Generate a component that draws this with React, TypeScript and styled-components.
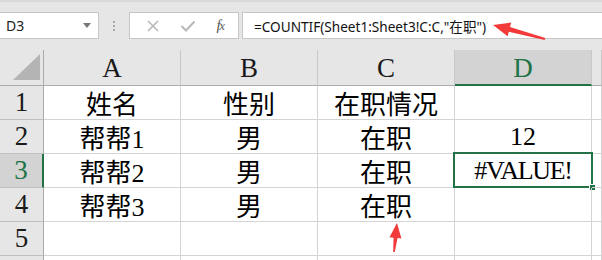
import React from "react";
import styled, { createGlobalStyle } from "styled-components";

const GlobalStyle = createGlobalStyle`
  html, body {
    margin: 0;
    padding: 0;
    background: #e6e6e6;
  }
`;

const Page = styled.div`
  position: relative;
  width: 602px;
  height: 260px;
  overflow: hidden;
  background: #e6e6e6;
  border-top: 2px solid #d9d9d9;
  box-sizing: border-box;
`;

const Toolbar = styled.div`
  display: flex;
  align-items: flex-start;
  height: 48px;
  padding-top: 10px;
  box-sizing: border-box;
`;

const NameBox = styled.div`
  width: 100px;
  height: 27px;
  margin-left: -1px;
  box-sizing: border-box;
  border: 1px solid #c6c6c6;
  background: #fff;
  display: flex;
  align-items: center;
  justify-content: space-between;
  padding: 0 7px 0 6px;
  font: 14px "Noto Sans", "Liberation Sans", sans-serif;
  color: #222;
`;

const Caret = styled.span`
  width: 0;
  height: 0;
  border-left: 4px solid transparent;
  border-right: 4px solid transparent;
  border-top: 5px solid #777;
`;

const Grip = styled.div`
  width: 30px;
  height: 27px;
  display: flex;
  flex-direction: column;
  align-items: center;
  justify-content: center;
  gap: 2px;
  span {
    width: 2px;
    height: 2px;
    background: #a8a8a8;
  }
`;

const ButtonBox = styled.div`
  width: 110px;
  height: 27px;
  box-sizing: border-box;
  border: 1px solid #c6c6c6;
  background: #fff;
  display: flex;
  align-items: center;
  justify-content: space-around;
  padding: 0 4px 0 6px;
`;

const FxLabel = styled.span`
  font: italic 15px "Liberation Serif", serif;
  color: #555;
  letter-spacing: -1px;
  small {
    font-size: 12px;
  }
`;

const FormulaInput = styled.div`
  flex: 1;
  height: 27px;
  margin-left: 3px;
  box-sizing: border-box;
  border: 1px solid #c6c6c6;
  border-right: none;
  background: #fff;
  display: flex;
  align-items: center;
  padding-left: 11px;
  font: 13.6px "Noto Sans", "Noto Sans CJK SC", sans-serif;
  color: #111;
  white-space: nowrap;
`;

const Grid = styled.div`
  display: grid;
  grid-template-columns: 44px repeat(4, 137px) 1fr;
  grid-template-rows: 36px;
  grid-auto-rows: 34px;
  background: #fff;
`;

const ColHead = styled.div<{ $selected?: boolean }>`
  display: flex;
  align-items: center;
  justify-content: center;
  box-sizing: border-box;
  background: ${({ $selected }) => ($selected ? "#d3d3d3" : "#e6e6e6")};
  border-right: 1px solid #c8c8c8;
  border-bottom: ${({ $selected }) =>
    $selected ? "2px solid #217346" : "1px solid #ababab"};
  color: ${({ $selected }) => ($selected ? "#217346" : "#1a1a1a")};
  font: 27px "Liberation Serif", "Noto Sans CJK SC", serif;
  padding-top: 2px;
`;

const Corner = styled(ColHead)`
  border-right: 1px solid #ababab;
  justify-content: flex-start;
  align-items: flex-start;
  padding: 0;
`;

const RowHead = styled.div<{ $selected?: boolean }>`
  display: flex;
  align-items: center;
  justify-content: center;
  box-sizing: border-box;
  background: ${({ $selected }) => ($selected ? "#d3d3d3" : "#e6e6e6")};
  border-right: ${({ $selected }) =>
    $selected ? "2px solid #217346" : "1px solid #ababab"};
  border-bottom: 1px solid #c0c0c0;
  color: ${({ $selected }) => ($selected ? "#217346" : "#1a1a1a")};
  font: 27px "Liberation Serif", "Noto Sans CJK SC", serif;
`;

const Cell = styled.div<{ $active?: boolean }>`
  position: relative;
  display: flex;
  align-items: center;
  justify-content: center;
  box-sizing: border-box;
  border-right: 1px solid #d4d4d4;
  border-bottom: 1px solid #d4d4d4;
  color: #000;
  font: 26px "Liberation Serif", "Noto Sans CJK SC", serif;
  white-space: nowrap;
  ${({ $active }) =>
    $active &&
    `
    letter-spacing: -1.3px;
    &::before {
      content: "";
      position: absolute;
      left: -2px;
      top: -2px;
      right: -2px;
      bottom: -1px;
      border: 2px solid #217346;
    }
    &::after {
      content: "";
      position: absolute;
      right: -5px;
      bottom: -4px;
      width: 5px;
      height: 5px;
      background: #217346;
      border: 1px solid #fff;
    }
  `}
`;

const Arrows = styled.svg`
  position: absolute;
  left: 0;
  top: -2px;
  pointer-events: none;
`;

const columns = ["A", "B", "C", "D", ""];
const rows: string[][] = [
  ["姓名", "性别", "在职情况", "", ""],
  ["帮帮1", "男", "在职", "12", ""],
  ["帮帮2", "男", "在职", "#VALUE!", ""],
  ["帮帮3", "男", "在职", "", ""],
  ["", "", "", "", ""],
  ["", "", "", "", ""],
];

const App: React.FC = () => {
  return (
    <Page>
      <GlobalStyle />
      <Toolbar>
        <NameBox>
          D3
          <Caret />
        </NameBox>
        <Grip>
          <span />
          <span />
          <span />
        </Grip>
        <ButtonBox>
          <svg width="14" height="14" viewBox="0 0 14 14">
            <path d="M2 2 L12 12 M12 2 L2 12" stroke="#b8b8b8" strokeWidth="1.6" />
          </svg>
          <svg width="16" height="14" viewBox="0 0 16 14">
            <path d="M1.5 7 L6 11.5 L14.5 2.5" stroke="#b8b8b8" strokeWidth="2" fill="none" />
          </svg>
          <FxLabel>
            f<small>x</small>
          </FxLabel>
        </ButtonBox>
        <FormulaInput>=COUNTIF(Sheet1:Sheet3!C:C,"在职")</FormulaInput>
      </Toolbar>
      <Grid>
        <Corner>
          <svg width="43" height="34" viewBox="0 0 43 34">
            <polygon points="13,30 40,30 40,4" fill="#b4b4b4" />
          </svg>
        </Corner>
        {columns.map((c, i) => (
          <ColHead key={i} $selected={c === "D"}>
            {c}
          </ColHead>
        ))}
        {rows.map((r, ri) => (
          <React.Fragment key={ri}>
            <RowHead $selected={ri === 2}>{ri < 5 ? ri + 1 : ""}</RowHead>
            {r.map((v, ci) => (
              <Cell key={ci} $active={ri === 2 && ci === 3}>
                {v}
              </Cell>
            ))}
          </React.Fragment>
        ))}
      </Grid>
      <Arrows width="602" height="260" viewBox="0 0 602 260">
        <polygon
          points="493,25 511.2,22.6 510,27 545.3,38 544.7,40 508.8,31.8 507.6,36.2"
          fill="#f23a3a"
        />
        <polygon
          points="397,223 401.4,238.5 397.5,238.1 394.8,252.1 393.2,251.9 393.5,237.7 389.5,237.3"
          fill="#f23a3a"
        />
      </Arrows>
    </Page>
  );
};

export default App;
